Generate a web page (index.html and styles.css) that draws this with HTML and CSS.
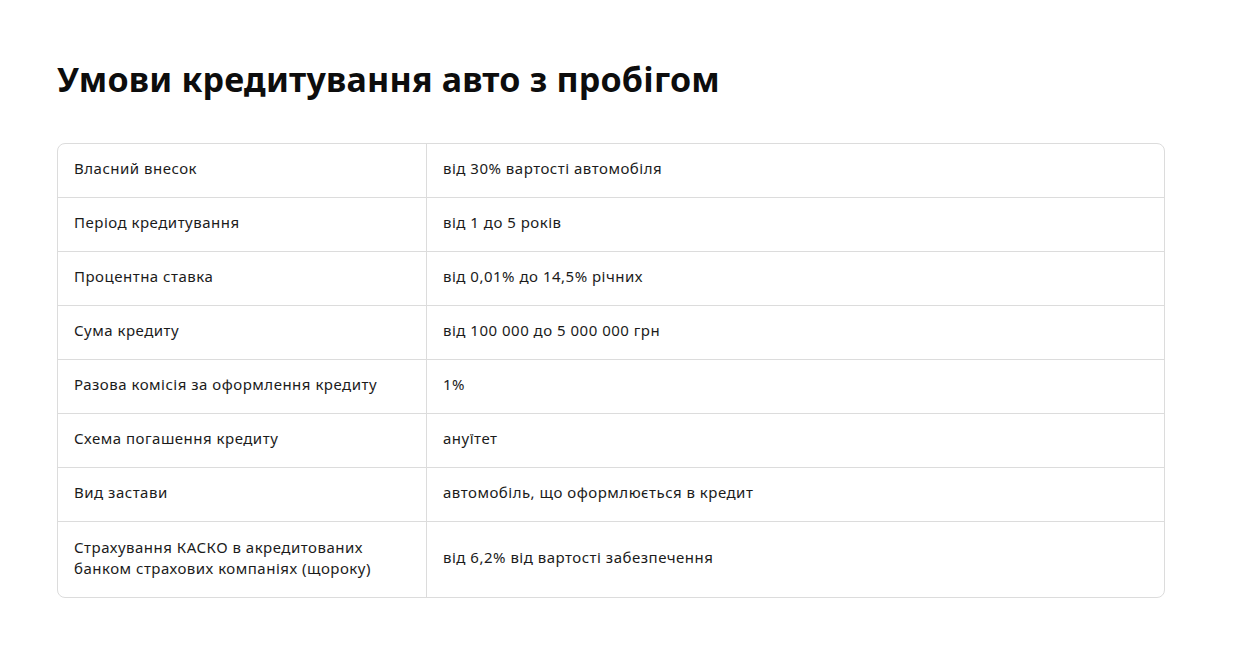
FILE: index.html
```html
<!DOCTYPE html>
<html lang="uk">
<head>
<meta charset="utf-8">
<link rel="stylesheet" href="styles.css">
</head>
<body>
<main class="page">
  <h1 class="title">Умови кредитування авто з пробігом</h1>
  <div class="terms">
    <div class="row"><div class="cell label">Власний внесок</div><div class="cell value">від 30% вартості автомобіля</div></div>
    <div class="row"><div class="cell label">Період кредитування</div><div class="cell value">від 1 до 5 років</div></div>
    <div class="row"><div class="cell label">Процентна ставка</div><div class="cell value">від 0,01% до 14,5% річних</div></div>
    <div class="row"><div class="cell label">Сума кредиту</div><div class="cell value">від 100 000 до 5 000 000 грн</div></div>
    <div class="row"><div class="cell label">Разова комісія за оформлення кредиту</div><div class="cell value">1%</div></div>
    <div class="row"><div class="cell label">Схема погашення кредиту</div><div class="cell value">ануїтет</div></div>
    <div class="row"><div class="cell label">Вид застави</div><div class="cell value">автомобіль, що оформлюється в кредит</div></div>
    <div class="row"><div class="cell label">Страхування КАСКО в акредитованих банком страхових компаніях (щороку)</div><div class="cell value">від 6,2% від вартості забезпечення</div></div>
  </div>
</main>
</body>
</html>
```
FILE: styles.css
```css
* { box-sizing: border-box; }
html, body { margin: 0; padding: 0; background: #fff; }
body {
  font-family: "Noto Sans", "Liberation Sans", sans-serif;
  color: #1b1b1b;
}
.page {
  padding: 58px 85px 0 57px;
}
.title {
  margin: 0 0 43px;
  font-size: 34px;
  line-height: 42px;
  font-weight: 700;
  color: #0d0d0d;
  letter-spacing: 0.2px;
}
.terms {
  border: 1px solid #dcdcdc;
  border-radius: 8px;
  overflow: hidden;
}
.row {
  display: grid;
  grid-template-columns: 369px 1fr;
  border-top: 1px solid #dcdcdc;
}
.row:first-child { border-top: none; }
.cell {
  display: flex;
  align-items: center;
  min-height: 53px;
  padding: 8px 16px 12px;
  font-size: 15px;
  line-height: 21px;
  letter-spacing: 0.5px;
}
.label {
  border-right: 1px solid #dcdcdc;
}
.row:last-child .cell { min-height: 75px; }
.row:last-child .label { padding-right: 30px; }
```
